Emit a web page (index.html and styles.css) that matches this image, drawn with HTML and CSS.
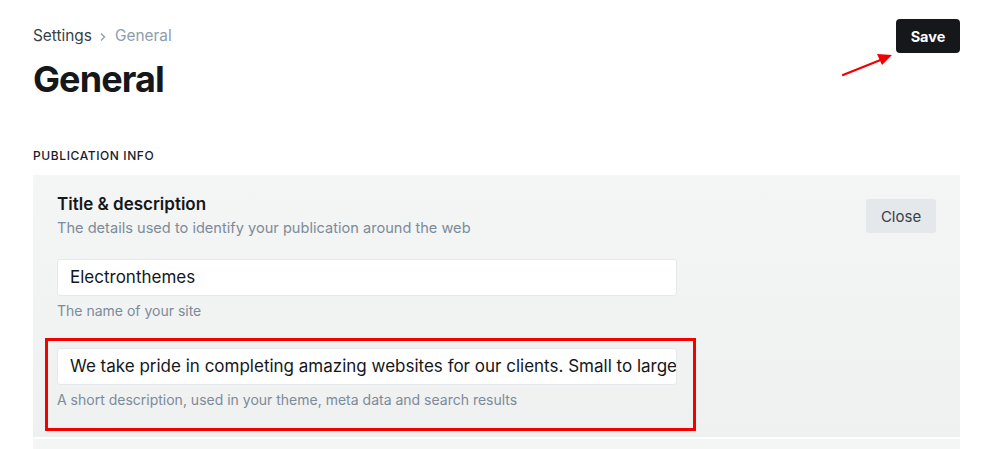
FILE: index.html
```html
<!DOCTYPE html>
<html>
<head>
<meta charset="utf-8">
<link rel="stylesheet" href="styles.css">
</head>
<body>
<div class="page">
  <header class="top">
    <div class="head-left">
      <nav class="crumbs"><span class="crumb">Settings</span><svg class="sep" width="8" height="10" viewBox="0 0 8 10"><path d="M2 1.5 L5.5 5 L2 8.5" fill="none" stroke="#8e9cac" stroke-width="1.3"/></svg><span class="crumb-current">General</span></nav>
      <h1 class="title">General</h1>
    </div>
    <div class="head-right">
      <button class="save">Save</button>
      <svg class="arrow" width="60" height="30" viewBox="0 0 60 30">
        <line x1="2" y1="27" x2="42" y2="11" stroke="#f00000" stroke-width="2.2" stroke-linecap="round"/>
        <polygon points="51,7 36,6 41,17" fill="#f00000"/>
      </svg>
    </div>
  </header>

  <section class="section">
    <h2 class="section-label">PUBLICATION INFO</h2>
    <div class="panel">
      <div class="panel-head">
        <div>
          <h3 class="panel-title">Title &amp; description</h3>
          <p class="panel-desc">The details used to identify your publication around the web</p>
        </div>
        <button class="close">Close</button>
      </div>
      <div class="field">
        <div class="input">Electronthemes</div>
        <p class="hint">The name of your site</p>
      </div>
      <div class="field field-marked">
        <div class="input">We take pride in completing amazing websites for our clients. Small to large</div>
        <p class="hint">A short description, used in your theme, meta data and search results</p>
        <div class="mark"></div>
      </div>
    </div>
    <div class="panel panel-next"></div>
  </section>
</div>
</body>
</html>
```

FILE: styles.css
```css
* { box-sizing: border-box; }
html, body { margin: 0; padding: 0; background: #fff; }
body {
  font-family: Inter, "Noto Sans", "Liberation Sans", sans-serif;
  color: #15171a;
  overflow: hidden;
  height: 449px;
}
.page {
  padding: 19px 27px 0 33px;
}
.top {
  display: flex;
  justify-content: space-between;
  align-items: flex-start;
}
.crumbs {
  margin-top: 7px;
  font-size: 15.4px;
  line-height: 20px;
  display: flex;
  align-items: center;
}
.crumb { color: #394047; }
.sep {
  margin: 1px 8px 0 7px;
}
.crumb-current { color: #8e9cac; }
.title {
  margin: 10px 0 0 0;
  font-size: 36px;
  line-height: 46px;
  font-weight: 700;
  letter-spacing: -0.025em;
  color: #15171a;
}
.head-right {
  position: relative;
}
.save {
  width: 64px;
  height: 34px;
  border: 0;
  border-radius: 4px;
  background: #15171a;
  color: #fff;
  font-family: inherit;
  font-size: 14.5px;
  font-weight: 700;
  padding: 0;
}
.arrow {
  position: absolute;
  left: -55px;
  top: 29px;
}
.section {
  margin-top: 46px;
}
.section-label {
  margin: 0 0 11px 0;
  font-size: 12px;
  line-height: 16px;
  font-weight: 500;
  letter-spacing: 0.05em;
  color: #15212a;
}
.panel {
  background: linear-gradient(#f4f5f5, #eff0f0);
  padding: 18px 24px 6px 24px;
  height: 262px;
}
.panel-next {
  margin-top: 2px;
  background: #f4f5f5;
  height: 20px;
}
.panel-head {
  display: flex;
  justify-content: space-between;
  align-items: flex-start;
}
.panel-title {
  margin: 0;
  font-size: 17px;
  line-height: 23px;
  font-weight: 600;
  color: #15171a;
}
.panel-desc {
  margin: 1px 0 0 0;
  font-size: 14.6px;
  line-height: 22px;
  color: #7c8b9a;
}
.close {
  margin-top: 6px;
  width: 70px;
  height: 34px;
  border: 0;
  border-radius: 3px;
  background: #e5e8eb;
  color: #394047;
  font-family: inherit;
  font-size: 15px;
  padding: 0;
}
.field {
  width: 620px;
}
.panel-head + .field { margin-top: 20px; }
.input {
  height: 37px;
  background: #fff;
  border: 1px solid #e6e9eb;
  border-radius: 3px;
  padding: 0 12px;
  font-size: 17px;
  line-height: 35px;
  color: #15171a;
  white-space: nowrap;
  overflow: hidden;
  text-overflow: clip;
}
.hint {
  margin: 7px 0 0 0;
  font-size: 14px;
  line-height: 16px;
  color: #7c8b9a;
}
.field-marked {
  position: relative;
  margin-top: 29px;
}
.mark {
  position: absolute;
  left: -12px;
  right: -19px;
  top: -10px;
  height: 93px;
  border: 3px solid #f40000;
}
```
